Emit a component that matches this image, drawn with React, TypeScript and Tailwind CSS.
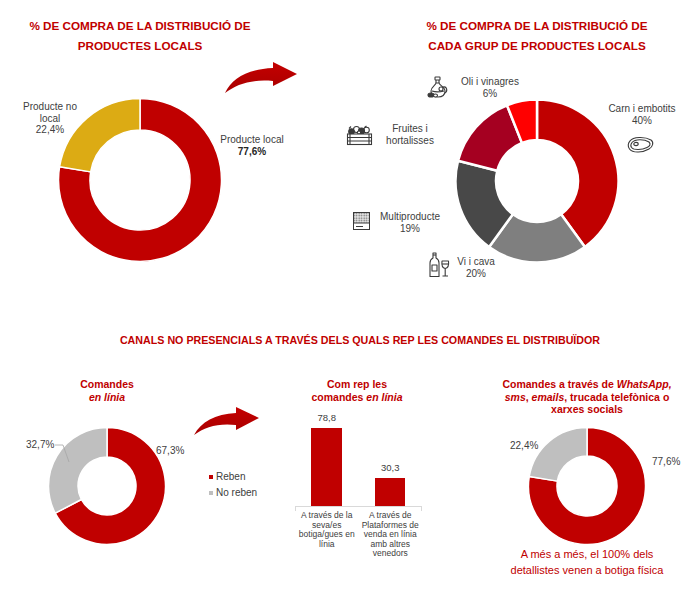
import React from 'react';

type Seg = { v: number; c: string };

function arc(cx: number, cy: number, R: number, r: number, f0: number, f1: number) {
  const a0 = f0 * 2 * Math.PI - Math.PI / 2;
  const a1 = f1 * 2 * Math.PI - Math.PI / 2;
  const large = f1 - f0 > 0.5 ? 1 : 0;
  const p = (rad: number, a: number) =>
    `${(cx + rad * Math.cos(a)).toFixed(2)} ${(cy + rad * Math.sin(a)).toFixed(2)}`;
  return `M ${p(R, a0)} A ${R} ${R} 0 ${large} 1 ${p(R, a1)} L ${p(r, a1)} A ${r} ${r} 0 ${large} 0 ${p(r, a0)} Z`;
}

function Donut({
  size,
  R,
  r,
  segs,
  gap = 1.5,
  className = '',
  children,
}: {
  size: number;
  R: number;
  r: number;
  segs: Seg[];
  gap?: number;
  className?: string;
  children?: React.ReactNode;
}) {
  const c = size / 2;
  const total = segs.reduce((s, x) => s + x.v, 0);
  let acc = 0;
  return (
    <svg width={size} height={size} viewBox={`0 0 ${size} ${size}`} className={className} overflow="visible">
      {segs.map((s, i) => {
        const f0 = acc / total;
        acc += s.v;
        const f1 = acc / total;
        return <path key={i} d={arc(c, c, R, r, f0, f1)} fill={s.c} stroke="#ffffff" strokeWidth={gap} strokeLinejoin="round" />;
      })}
      {children}
    </svg>
  );
}

function Arrow({ d, w, h, className }: { d: string; w: number; h: number; className: string }) {
  return (
    <svg width={w} height={h} viewBox={`0 0 ${w} ${h}`} className={className}>
      <defs>
        <linearGradient id={`ag${w}`} x1="0" y1="0" x2="0" y2="1">
          <stop offset="0" stopColor="#c40000" />
          <stop offset="1" stopColor="#a80000" />
        </linearGradient>
      </defs>
      <path d={d} fill={`url(#ag${w})`} />
    </svg>
  );
}

function OilIcon() {
  return (
    <svg width="22" height="23" viewBox="0 0 22 23" className="absolute left-[107px] top-[76px]" fill="none" stroke="#3a3a3a" strokeWidth="1.1" strokeLinejoin="round">
      <rect x="8" y="1" width="5" height="3" rx="0.5" />
      <path d="M9 4 v3 M12 4 v3" />
      <path d="M9 7 C 9 9 4 11 4 15 C 4 19 7 21 11 21 C 15 21 18 19 18 15 C 18 11 12 9 12 7 Z" />
      <path d="M16 11 C 20 10 21 15 18 17" />
      <circle cx="14" cy="13" r="2" />
      <path d="M5 15 C 8 16 13 16 17 15" />
      <ellipse cx="4" cy="19" rx="3" ry="2" fill="#3a3a3a" />
      <ellipse cx="8.5" cy="19.5" rx="2" ry="1.5" fill="#ffffff" />
    </svg>
  );
}

function CrateIcon() {
  return (
    <svg width="27" height="21" viewBox="0 0 27 21" className="absolute left-[26px] top-[125px]" fill="none" stroke="#3a3a3a" strokeWidth="1.1">
      <circle cx="5.5" cy="6.5" r="2.8" fill="#3a3a3a" />
      <circle cx="10.5" cy="4.5" r="3" />
      <circle cx="15.5" cy="6" r="3" fill="#3a3a3a" />
      <circle cx="20.5" cy="5" r="2.8" />
      <circle cx="13" cy="7.5" r="1.6" fill="#ffffff" />
      <path d="M3 3.5 L5 1.5 M18.5 2.5 L20.5 1" />
      <rect x="1.5" y="9" width="24" height="10.5" fill="#ffffff" />
      <path d="M1.5 12.5 H25.5 M1.5 16 H25.5 M4 9 V19.5 M23 9 V19.5" />
    </svg>
  );
}

function BoxIcon() {
  return (
    <svg width="17" height="18" viewBox="0 0 17 18" className="absolute left-[33px] top-[212px]">
      <defs>
        <pattern id="grid" width="2.5" height="2.5" patternUnits="userSpaceOnUse">
          <rect width="2.5" height="2.5" fill="#ffffff" />
          <rect x="0.4" y="0.4" width="1.6" height="1.6" fill="#6a6a6a" />
        </pattern>
      </defs>
      <rect x="0.5" y="0.5" width="16" height="17" fill="url(#grid)" stroke="#3a3a3a" strokeWidth="1" />
      <rect x="1" y="11" width="15" height="6" fill="#ffffff" />
      <path d="M0.5 11 H16.5 M3 14.5 H10" stroke="#3a3a3a" strokeWidth="1" />
    </svg>
  );
}

function WineIcon() {
  return (
    <svg width="21" height="26" viewBox="0 0 21 26" className="absolute left-[109px] top-[252px]" fill="none" stroke="#3a3a3a" strokeWidth="1.1" strokeLinejoin="round">
      <path d="M4 1 H7 V6 C 9 7 10 9 10 11 V24.5 H1 V11 C 1 9 2 7 4 6 Z" />
      <rect x="3" y="13" width="5" height="6" />
      <path d="M4 3 H7" />
      <path d="M13 9 H19.5 C 20 13 19 16 16.2 16.5 C 13.5 16 12.5 13 13 9 Z" />
      <path d="M13 12 H19.6" />
      <path d="M16.2 16.5 V23.5 M13.5 24 H19" />
    </svg>
  );
}

function SteakIcon() {
  return (
    <svg width="27" height="18" viewBox="0 0 27 18" className="absolute left-[307px] top-[136px]" fill="none" stroke="#3a3a3a" strokeWidth="1.1" strokeLinejoin="round">
      <path d="M3 5 C 6 0.5 18 0.5 24 4 C 27 6 26 11 22 13 C 16 16.5 6 17.5 2.5 13 C 0.5 10.5 1 7 3 5 Z" />
      <path d="M5 6.5 C 8 3 17 3 22 6 C 24 8 23 10 20 11.5 C 15 14 7 14.5 4.5 11.5 C 3.5 10 3.8 8 5 6.5 Z" />
      <ellipse cx="9" cy="8" rx="2.2" ry="1.6" />
    </svg>
  );
}

export default function App() {
  const red = '#c00000';
  return (
    <div className="relative w-[700px] h-[603px] overflow-hidden bg-white font-['Liberation_Sans',Arial,sans-serif] text-[#404040]">
      {/* Top row */}
      <div className="flex h-[330px]">
        <div className="relative w-[280px]">
          <div className="pt-[16px] text-center text-[11.7px] font-bold leading-[20px] text-[#c00000]">
            % DE COMPRA DE LA DISTRIBUCIÓ DE
            <br />
            PRODUCTES LOCALS
          </div>
          <Donut
            size={162}
            R={81.5}
            r={50}
            gap={1.5}
            className="mx-auto mt-[43px] block"
            segs={[
              { v: 77.6, c: red },
              { v: 22.4, c: '#dcab14' },
            ]}
          />
          <div className="absolute left-[10px] top-[101px] w-[80px] text-center text-[10px] leading-[11.5px]">
            Producte no
            <br />
            local
            <br />
            22,4%
          </div>
          <div className="absolute left-[212px] top-[134px] w-[80px] text-center text-[10px] leading-[11.5px]">
            Producte local
            <br />
            <span className="font-bold text-[#262626]">77,6%</span>
          </div>
        </div>

        <div className="-ml-[60px] pt-[58px]">
          <Arrow
            w={80}
            h={40}
            className="block"
            d="M5 35 C 12 20 28 11 53 10 L53 4 L77 16 L53 28 L53 23 C 32 21 17 26 5 35 Z"
          />
        </div>

        <div className="relative ml-auto w-[380px] pl-[54px]">
          <div className="pt-[16px] text-center text-[11.7px] font-bold leading-[20px] text-[#c00000]">
            % DE COMPRA DE LA DISTRIBUCIÓ DE
            <br />
            CADA GRUP DE PRODUCTES LOCALS
          </div>
          <Donut
            size={162}
            R={81.5}
            r={41}
            gap={2.5}
            className="mx-auto mt-[44px] block"
            segs={[
              { v: 40, c: red },
              { v: 20, c: '#7f7f7f' },
              { v: 19, c: '#484848' },
              { v: 15, c: '#a50021' },
              { v: 6, c: '#ff0000' },
            ]}
          />
          <div className="absolute left-[130px] top-[76px] w-[80px] text-center text-[10px] leading-[11.5px]">
            Oli i vinagres
            <br />
            6%
          </div>
          <div className="absolute left-[282px] top-[103px] w-[80px] text-center text-[10px] leading-[11.5px]">
            Carn i embotits
            <br />
            40%
          </div>
          <div className="absolute left-[55px] top-[123px] w-[70px] text-center text-[10px] leading-[11.5px]">
            Fruites i
            <br />
            hortalisses
          </div>
          <div className="absolute left-[55px] top-[211px] w-[70px] text-center text-[10px] leading-[11.5px]">
            Multiproducte
            <br />
            19%
          </div>
          <div className="absolute left-[126px] top-[256px] w-[60px] text-center text-[10px] leading-[11.5px]">
            Vi i cava
            <br />
            20%
          </div>
          <OilIcon />
          <CrateIcon />
          <BoxIcon />
          <WineIcon />
          <SteakIcon />
        </div>
      </div>

      {/* Middle title */}
      <div className="pl-[20px] text-center text-[10.7px] font-bold leading-[20px] text-[#c00000]">
        CANALS NO PRESENCIALS A TRAVÉS DELS QUALS REP LES COMANDES EL DISTRIBUÏDOR
      </div>

      {/* Bottom row */}
      <div className="mt-[28px] flex items-start">
        <div className="flex w-[286px]">
          <div className="relative w-[214px]">
            <div className="text-center text-[10.5px] font-bold leading-[13px] text-[#c00000]">
              Comandes
              <br />
              <i>en línia</i>
            </div>
            <Donut
              size={116}
              R={58.5}
              r={29}
              gap={1.5}
              className="ml-[49px] mt-[24px] block"
              segs={[
                { v: 67.3, c: red },
                { v: 32.7, c: '#bfbfbf' },
              ]}
            >
              <polyline points="6,17 14,17 20,34" fill="none" stroke="#a6a6a6" strokeWidth="0.8" />
            </Donut>
            <div className="absolute left-[26px] top-[61px] text-[10px] leading-[12px]">32,7%</div>
            <div className="absolute left-[156px] top-[67px] text-[10px] leading-[12px]">67,3%</div>
          </div>
          <div className="-ml-[24px] flex flex-col pt-[25px]">
            <Arrow
              w={72}
              h={36}
              className="block"
              d="M4 32 C 11 19 25 11 46 10 L46 4 L69 15 L46 27 L46 22 C 28 20 15 24 4 32 Z"
            />
            <div className="ml-[19px] mt-[30px] flex flex-col text-[10px] leading-[16px]">
              <div className="flex items-center gap-[3px]">
                <span className="block h-[4px] w-[4px] bg-[#c00000]" />
                Reben
              </div>
              <div className="flex items-center gap-[3px]">
                <span className="block h-[4px] w-[4px] bg-[#bfbfbf]" />
                No reben
              </div>
            </div>
          </div>
        </div>

        <div className="w-[142px]">
          <div className="text-center text-[10.5px] font-bold leading-[13px] text-[#c00000]">
            Com rep les
            <br />
            comandes <i>en línia</i>
          </div>
          <div className="ml-[9px] w-[127px]">
            <div className="flex h-[102px]">
              <div className="flex flex-1 flex-col items-center justify-end">
                <div className="mb-[4px] text-[9.5px] leading-[12px]">78,8</div>
                <div className="h-[78px] w-[31px] bg-[#c00000]" />
              </div>
              <div className="flex flex-1 flex-col items-center justify-end">
                <div className="mb-[4px] text-[9.5px] leading-[12px]">30,3</div>
                <div className="h-[28px] w-[30px] bg-[#c00000]" />
              </div>
            </div>
            <div className="h-[5px] border-x border-t border-[#d9d9d9]" />
            <div className="flex text-center text-[8.5px] leading-[9.6px] whitespace-nowrap">
              <div className="flex-1">
                A través de la
                <br />
                seva/es
                <br />
                botiga/gues en
                <br />
                línia
              </div>
              <div className="flex-1">
                A través de
                <br />
                Plataformes de
                <br />
                venda en línia
                <br />
                amb altres
                <br />
                venedors
              </div>
            </div>
          </div>
        </div>

        <div className="relative ml-auto w-[226px]">
          <div className="text-center text-[10.5px] font-bold leading-[12.5px] text-[#c00000] whitespace-nowrap">
            Comandes a través de <i>WhatsApp,</i>
            <br />
            <i>sms</i>, <i>emails</i>, trucada telefònica o
            <br />
            xarxes socials
          </div>
          <Donut
            size={116}
            R={58.5}
            r={30}
            gap={1.5}
            className="mx-auto mt-[12.5px] block"
            segs={[
              { v: 77.6, c: red },
              { v: 22.4, c: '#bfbfbf' },
            ]}
          />
          <div className="absolute left-[36px] top-[62px] text-[10px] leading-[12px]">22,4%</div>
          <div className="absolute left-[178px] top-[78px] text-[10px] leading-[12px]">77,6%</div>
          <div className="mt-[3px] text-center text-[11px] leading-[15.5px] text-[#c00000] whitespace-nowrap">
            A més a més, el 100% dels
            <br />
            detallistes venen a botiga física
          </div>
        </div>
      </div>
    </div>
  );
}
